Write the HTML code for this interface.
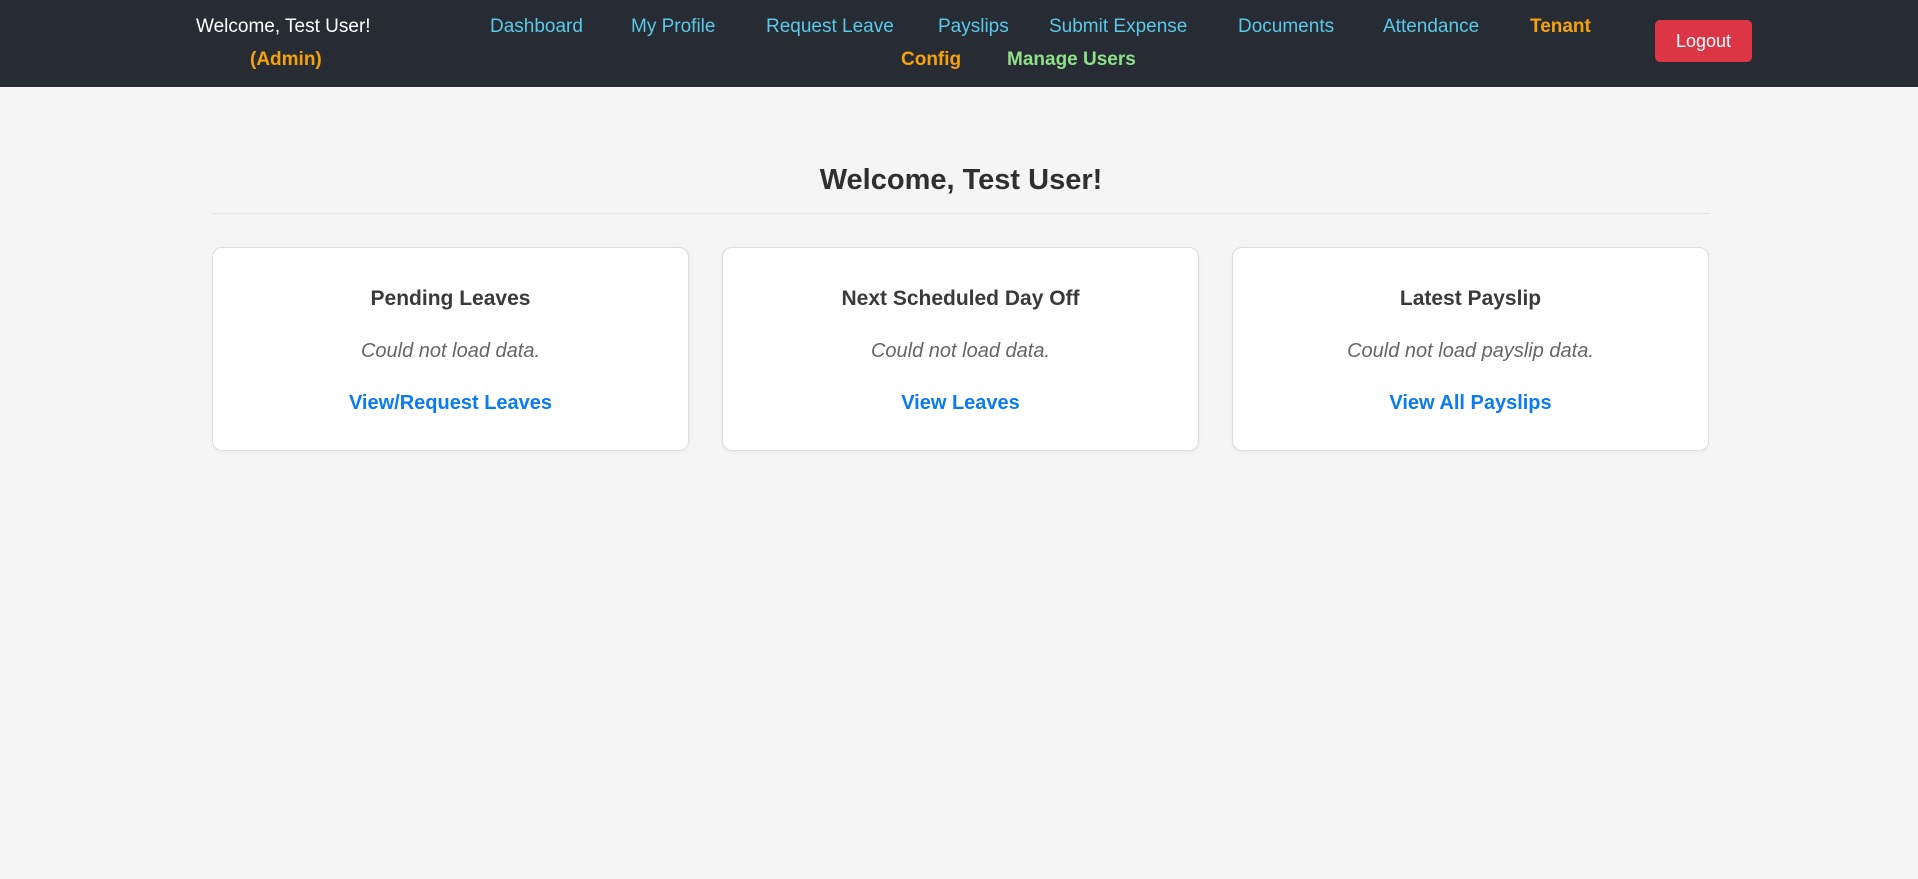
<!DOCTYPE html>
<html><head><meta charset="utf-8"><style>
*{margin:0;padding:0;box-sizing:border-box}
body{width:1918px;height:879px;background:#f4f5f4;font-family:"Liberation Sans",sans-serif;position:relative;overflow:hidden}
.hdr{position:absolute;left:0;top:0;width:1918px;height:87px;background:#272b33}
.t{position:absolute;white-space:nowrap;font-size:19px;line-height:22px}
.n{color:#5bc8e8}
.o{color:#f5a30a;font-weight:bold}
.g{color:#90e08a;font-weight:bold}
.btn{position:absolute;left:1655px;top:20px;width:97px;height:42px;background:#dc3545;border-radius:5px;color:#fff;font-size:18px;text-align:center;line-height:42px}
h1{position:absolute;left:212px;width:1498px;top:164px;text-align:center;font-size:29px;color:#2f2f2f}
.hr{position:absolute;left:212px;width:1498px;top:213px;height:1px;background:#e6e6e6}
.card{position:absolute;top:247px;width:477px;height:204px;background:#fff;border:1px solid #dedede;border-radius:10px;box-shadow:0 1px 3px rgba(0,0,0,.05);text-align:center}
.card h3{position:absolute;left:0;top:39px;width:100%;font-size:21px;color:#3a3a3a}
.card p{position:absolute;left:0;top:92px;width:100%;font-size:20px;font-style:italic;color:#666}
.card a{display:block;position:absolute;left:0;top:144px;width:100%;font-size:20px;font-weight:bold;color:#0a7bf5;text-decoration:none}
</style></head><body>
<div class="hdr">
<div class="t" style="left:196px;top:16px;color:#fff">Welcome, Test User!</div>
<div class="t o" style="left:250px;top:49px">(Admin)</div>
<div class="t n" style="left:490px;top:16px">Dashboard</div>
<div class="t n" style="left:631px;top:16px">My Profile</div>
<div class="t n" style="left:766px;top:16px">Request Leave</div>
<div class="t n" style="left:938px;top:16px">Payslips</div>
<div class="t n" style="left:1049px;top:16px">Submit Expense</div>
<div class="t n" style="left:1238px;top:16px">Documents</div>
<div class="t n" style="left:1383px;top:16px">Attendance</div>
<div class="t o" style="left:1530px;top:16px">Tenant</div>
<div class="t o" style="left:901px;top:49px">Config</div>
<div class="t g" style="left:1007px;top:49px">Manage Users</div>
<div class="btn">Logout</div>
</div>
<h1>Welcome, Test User!</h1>
<div class="hr"></div>
<div class="card" style="left:212px"><h3>Pending Leaves</h3><p>Could not load data.</p><a>View/Request Leaves</a></div>
<div class="card" style="left:722px"><h3>Next Scheduled Day Off</h3><p>Could not load data.</p><a>View Leaves</a></div>
<div class="card" style="left:1232px"><h3>Latest Payslip</h3><p>Could not load payslip data.</p><a>View All Payslips</a></div>
</body></html>
